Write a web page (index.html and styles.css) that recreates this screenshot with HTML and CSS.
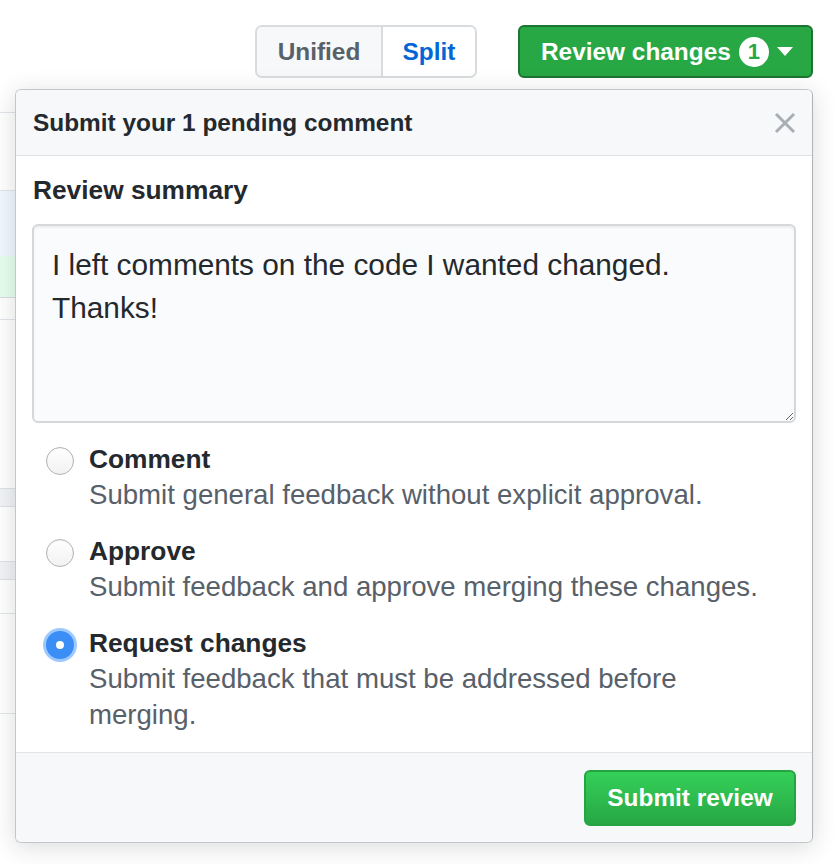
FILE: index.html
```html
<!DOCTYPE html>
<html lang="en">
<head>
<meta charset="utf-8">
<title>Review changes</title>
<link rel="stylesheet" href="styles.css">
</head>
<body>
<div class="page">
  <div class="toolbar">
    <div class="btn-group">
      <button class="seg seg-unified" type="button">Unified</button>
      <button class="seg seg-split" type="button">Split</button>
    </div>
    <button class="btn-review" type="button"><span class="review-label">Review changes</span><span class="counter">1</span><span class="caret"></span></button>
  </div>

  <div class="diff">
    <div class="drow d1"></div>
    <div class="drow d2"></div>
    <div class="drow d-blue"></div>
    <div class="drow d-green"></div>
    <div class="drow d3"></div>
    <div class="drow d4"></div>
    <div class="drow d-band"></div>
    <div class="drow d5"></div>
    <div class="drow d-band"></div>
    <div class="drow d6"></div>
    <div class="drow d7"></div>
    <div class="drow d8"></div>
  </div>

  <div class="popup">
    <div class="popup-header">
      <h3 class="popup-title">Submit your 1 pending comment</h3>
      <button class="close" type="button" aria-label="Close">
        <svg width="22" height="22" viewBox="0 0 22 22"><path d="M2 2 L20 20 M20 2 L2 20" stroke="#a9aeb3" stroke-width="3" stroke-linecap="butt" fill="none"/></svg>
      </button>
    </div>
    <div class="popup-body">
      <h4 class="summary-label">Review summary</h4>
      <textarea class="summary">I left comments on the code I wanted changed.
Thanks!</textarea>
      <div class="options">
        <label class="option">
          <span class="radio"></span>
          <span class="option-text">
            <span class="option-title">Comment</span>
            <span class="option-desc">Submit general feedback without explicit approval.</span>
          </span>
        </label>
        <label class="option">
          <span class="radio"></span>
          <span class="option-text">
            <span class="option-title">Approve</span>
            <span class="option-desc">Submit feedback and approve merging these changes.</span>
          </span>
        </label>
        <label class="option">
          <span class="radio radio-checked"></span>
          <span class="option-text">
            <span class="option-title">Request changes</span>
            <span class="option-desc">Submit feedback that must be addressed before merging.</span>
          </span>
        </label>
      </div>
    </div>
    <div class="popup-footer">
      <button class="btn-submit" type="button">Submit review</button>
    </div>
  </div>
</div>
</body>
</html>
```

FILE: styles.css
```css
* { box-sizing: border-box; }

body {
  margin: 0;
  background: #fff;
  font-family: "Liberation Sans", Arial, sans-serif;
  color: #24292e;
}

.page {
  position: relative;
  width: 834px;
  height: 864px;
  overflow: hidden;
}

/* Toolbar */
.toolbar {
  display: flex;
  justify-content: flex-end;
  align-items: flex-start;
  gap: 41px;
  padding: 25px 21px 0 0;
  height: 78px;
}

.btn-group {
  display: flex;
  width: 222px;
  height: 53px;
  border: 2px solid #d9dcdf;
  border-radius: 7px;
  overflow: hidden;
}

.seg {
  margin: 0;
  padding: 0;
  border: 0;
  font-family: "Liberation Sans", Arial, sans-serif;
  font-weight: bold;
  font-size: 24.4px;
  cursor: pointer;
}

.seg-unified {
  width: 126px;
  background: #f6f8fa;
  color: #586069;
  border-right: 2px solid #d9dcdf;
}

.seg-split {
  flex: 1;
  background: #fff;
  color: #0366d6;
}

.btn-review {
  display: flex;
  align-items: center;
  width: 295px;
  height: 53px;
  margin: 0;
  padding: 0 0 0 21px;
  background: #28a745;
  border: 2px solid #1d7531;
  border-radius: 6px;
  color: #fff;
  font-family: "Liberation Sans", Arial, sans-serif;
  font-weight: bold;
  font-size: 24.4px;
}

.counter {
  display: flex;
  align-items: center;
  justify-content: center;
  width: 30px;
  height: 30px;
  margin-left: 8px;
  border-radius: 50%;
  background: #fff;
  color: #28a745;
  font-size: 22px;
  font-weight: bold;
}

.caret {
  width: 0;
  height: 0;
  margin-left: 8px;
  border-top: 9px solid #fff;
  border-left: 8px solid transparent;
  border-right: 8px solid transparent;
}

/* Background diff rows */
.diff {
  width: 800px;
}

.drow { background: #fff; }
.d1 { height: 35px; border-bottom: 1px solid #e1e4e8; }
.d2 { height: 78px; border-bottom: 1px solid #e1e4e8; }
.d-blue { height: 65px; background: #f1f8ff; }
.d-green { height: 42px; background: #e6ffed; border-bottom: 1px solid #d8dde2; }
.d3 { height: 22px; border-bottom: 1px solid #e1e4e8; }
.d4 { height: 168px; }
.d-band { height: 19px; background: #f1f3f5; border-top: 1px solid #dfe2e5; border-bottom: 1px solid #dfe2e5; }
.d5 { height: 54px; }
.d6 { height: 34px; border-bottom: 1px solid #e1e4e8; }
.d7 { height: 100px; border-bottom: 1px solid #e1e4e8; }
.d8 { height: 160px; }

/* Popup */
.popup {
  position: absolute;
  top: 89px;
  left: 15px;
  width: 798px;
  background: #fff;
  border: 1px solid #c4c7ca;
  border-right-color: #b0b3b6;
  border-radius: 6px;
  box-shadow: 0 4px 24px rgba(27, 31, 35, 0.16);
  overflow: hidden;
}

.popup-header {
  display: flex;
  align-items: center;
  justify-content: space-between;
  height: 66px;
  padding: 0 16px 0 17px;
  background: #f6f8fa;
  border-bottom: 1px solid #dfe2e5;
}

.popup-title {
  margin: 0;
  font-size: 24.4px;
  font-weight: bold;
  color: #24292e;
}

.close {
  display: flex;
  padding: 0;
  margin: 0;
  border: 0;
  background: transparent;
}

.popup-body {
  padding: 16px 16px 19px;
}

.summary-label {
  margin: 0 0 16px;
  padding-left: 1px;
  font-size: 26.3px;
  line-height: 36px;
  font-weight: bold;
}

.summary {
  display: block;
  width: 100%;
  height: 199px;
  margin: 0;
  padding: 17px 18px;
  background: #fafbfc;
  border: 2px solid #d5d8db;
  border-radius: 6px;
  box-shadow: inset 0 2px 2px rgba(27, 31, 35, 0.06);
  font-family: "Liberation Sans", Arial, sans-serif;
  font-size: 29.8px;
  line-height: 43px;
  color: #24292e;
  resize: vertical;
  outline: none;
}

.options {
  margin-top: 18px;
  display: flex;
  flex-direction: column;
  gap: 20px;
}

.option {
  display: flex;
  align-items: flex-start;
}

.radio {
  flex-shrink: 0;
  width: 28px;
  height: 28px;
  margin: 6px 0 0 14px;
  border-radius: 50%;
  border: 1.5px solid #b3b3b3;
  background: linear-gradient(#ffffff, #f2f2f2);
  box-shadow: inset 0 1px 1px rgba(0, 0, 0, 0.04);
}

.radio-checked {
  position: relative;
  border: 0;
  background: #3a8ef6;
  box-shadow: 0 0 0 3px rgba(92, 165, 255, 0.6);
}

.radio-checked::after {
  content: "";
  position: absolute;
  left: 10px;
  top: 10px;
  width: 8px;
  height: 8px;
  border-radius: 50%;
  background: #fff;
}

.option-text {
  display: flex;
  flex-direction: column;
  max-width: 680px;
  margin-left: 15px;
}

.option-title {
  font-size: 26.3px;
  line-height: 36px;
  font-weight: bold;
  color: #24292e;
}

.option-desc {
  font-size: 27.6px;
  line-height: 36px;
  color: #586069;
}

.popup-footer {
  display: flex;
  justify-content: flex-end;
  padding: 17px 16px 16px;
  background: #f6f8fa;
  border-top: 1px solid #e1e4e8;
}

.btn-submit {
  width: 212px;
  height: 56px;
  margin: 0;
  padding: 0;
  border: 2px solid #27a442;
  border-radius: 6px;
  background: linear-gradient(#34d058, #28a745);
  color: #fff;
  font-family: "Liberation Sans", Arial, sans-serif;
  font-size: 24.4px;
  font-weight: bold;
}
```
